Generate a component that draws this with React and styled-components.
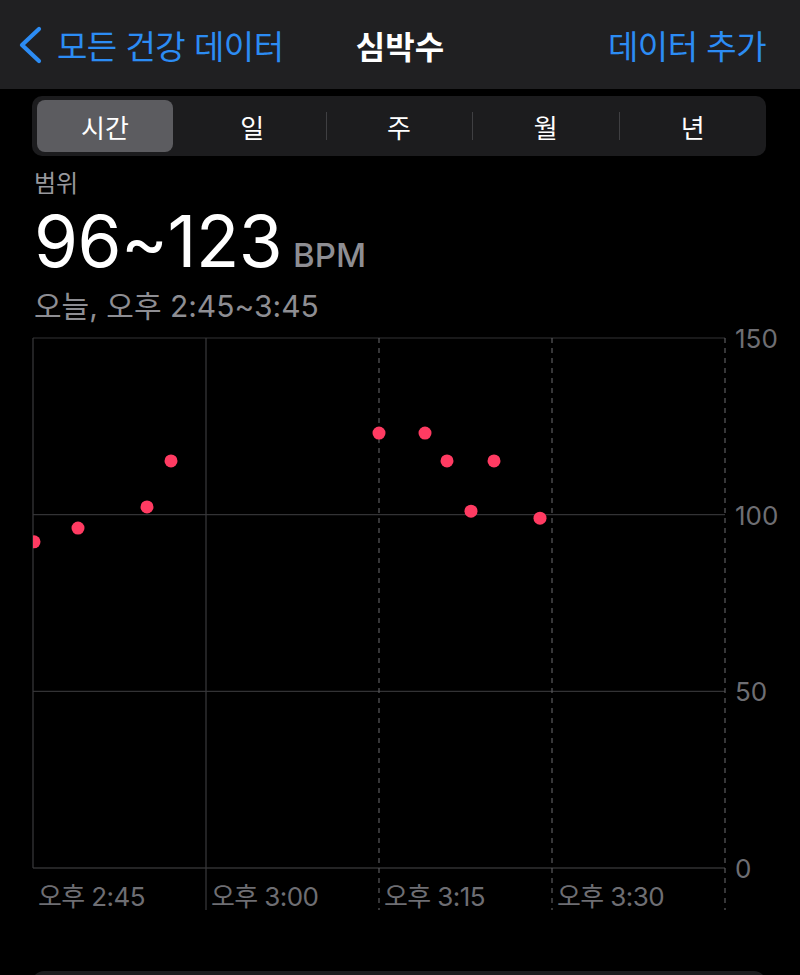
import React from 'react';
import styled, { createGlobalStyle } from 'styled-components';

const GlobalStyle = createGlobalStyle`
  body {
    margin: 0;
    background: #000;
    font-family: Inter, "Noto Sans CJK KR", sans-serif;
    color: #fff;
  }
`;

const S = {
  Page: styled.div`
    width: 800px;
    height: 975px;
    overflow: hidden;
    background: #000;
  `,
  NavBar: styled.header`
    height: 89px;
    background: #202022;
    display: grid;
    grid-template-columns: 1fr auto 1fr;
    align-items: center;
    padding: 0 34px;
  `,
  Back: styled.div`
    display: flex;
    align-items: center;
    gap: 14px;
    margin-left: -17px;
    color: #2c8cf4;
    font-size: 33px;
    letter-spacing: -0.5px;
  `,
  Title: styled.h1`
    margin: 0;
    font-size: 32px;
    font-weight: 700;
    color: #fff;
  `,
  Action: styled.div`
    justify-self: end;
    color: #2c8cf4;
    font-size: 33px;
    letter-spacing: -0.5px;
  `,
  Segmented: styled.div`
    margin: 7px 34px 0 32px;
    height: 60px;
    background: #1c1c1e;
    border-radius: 10px;
    display: grid;
    grid-template-columns: repeat(5, 1fr);
  `,
  Segment: styled.div`
    position: relative;
    display: flex;
    align-items: center;
    justify-content: center;
    margin: ${(p) => (p.$active ? '4px 6px 4px 5px' : '0')};
    border-radius: 8px;
    font-size: 26px;
    color: #fff;
    background: ${(p) => (p.$active ? '#5c5c60' : 'transparent')};
    &::before {
      content: '';
      display: ${(p) => (p.$divider ? 'block' : 'none')};
      position: absolute;
      left: 0;
      top: 16px;
      bottom: 16px;
      width: 1px;
      background: #3f3f42;
    }
  `,
  Summary: styled.section`
    padding: 13px 0 0 34px;
  `,
  Label: styled.div`
    font-size: 24px;
    color: #98989d;
    line-height: 30px;
  `,
  Value: styled.div`
    display: flex;
    align-items: baseline;
    gap: 11px;
    margin-top: 4px;
    line-height: 76px;
  `,
  Big: styled.span`
    font-size: 71px;
    font-weight: 400;
    letter-spacing: -0.5px;
    color: #fff;
  `,
  Unit: styled.span`
    font-size: 33px;
    font-weight: 500;
    color: #8e8e93;
  `,
  Date: styled.div`
    font-size: 30px;
    color: #8e8e93;
    line-height: 36px;
    margin-top: -5px;
  `,
  Chart: styled.svg`
    display: block;
    margin-top: -6px;
  `,
  AxisText: styled.text`
    fill: #6e6e73;
    font-size: 26px;
    font-family: Inter, "Noto Sans CJK KR", sans-serif;
  `,
  Card: styled.div`
    margin: 51px 34px 0 32px;
    height: 60px;
    background: #1c1c1e;
    border-radius: 12px;
  `,
};

const TOP = 20;
const BASE = 550;
const yFor = (v) => TOP + (BASE - TOP) * (1 - v / 150);
const cols = [33, 206, 379, 552, 725];
const times = ['오후 2:45', '오후 3:00', '오후 3:15', '오후 3:30'];
const points = [
  [34, 92.3], [78, 96.2], [147, 102.2], [171, 115.2],
  [379, 123.1], [425, 123.1], [447, 115.2], [471, 101], [494, 115.2], [540, 99],
];

const HeartChart = () => (
  <S.Chart width="800" height="602" viewBox="0 0 800 602">
    <defs>
      <clipPath id="plot">
        <rect x="33" y={TOP} width="692" height={BASE - TOP} />
      </clipPath>
    </defs>
    {[150, 100, 50, 0].map((v) => (
      <g key={v}>
        <line x1="33" x2="725" y1={yFor(v)} y2={yFor(v)} stroke={v === 0 ? '#48484a' : '#333335'} strokeWidth="1.2" />
        <S.AxisText x="735" y={yFor(v) + 10}>{v}</S.AxisText>
      </g>
    ))}
    {cols.map((x, i) => (
      <line
        key={x}
        x1={x}
        x2={x}
        y1={TOP}
        y2={i === 0 ? BASE : 592}
        stroke={i < 2 ? '#3a3a3c' : '#5a5a5e'}
        strokeWidth="1.2"
        strokeDasharray={i < 2 ? undefined : '5 5'}
      />
    ))}
    {times.map((t, i) => (
      <S.AxisText key={t} x={cols[i] + 5} y="588" letterSpacing="-0.6">{t}</S.AxisText>
    ))}
    <g clipPath="url(#plot)">
      {points.map(([x, v]) => (
        <circle key={x} cx={x} cy={yFor(v)} r="6.5" fill="#ff3b62" />
      ))}
    </g>
  </S.Chart>
);

const tabs = ['시간', '일', '주', '월', '년'];

export default function App() {
  const active = 0;
  return (
    <S.Page>
      <GlobalStyle />
      <S.NavBar>
        <S.Back>
          <svg width="26" height="38" viewBox="0 0 26 38">
            <polyline points="22,3 5,19 22,35" fill="none" stroke="#2c8cf4" strokeWidth="4.2" strokeLinecap="round" strokeLinejoin="round" />
          </svg>
          모든 건강 데이터
        </S.Back>
        <S.Title>심박수</S.Title>
        <S.Action>데이터 추가</S.Action>
      </S.NavBar>
      <S.Segmented>
        {tabs.map((t, i) => (
          <S.Segment key={t} $active={i === active} $divider={i > 0 && i !== active && i - 1 !== active}>
            {t}
          </S.Segment>
        ))}
      </S.Segmented>
      <S.Summary>
        <S.Label>범위</S.Label>
        <S.Value>
          <S.Big>96~123</S.Big>
          <S.Unit>BPM</S.Unit>
        </S.Value>
        <S.Date>오늘, 오후 2:45~3:45</S.Date>
      </S.Summary>
      <HeartChart />
      <S.Card />
    </S.Page>
  );
}
